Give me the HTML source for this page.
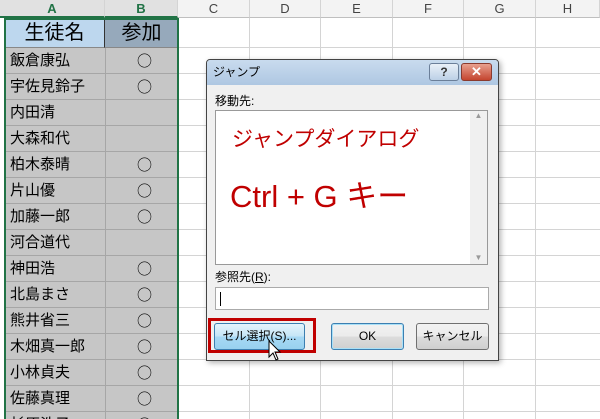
<!DOCTYPE html>
<html><head><meta charset="utf-8"><style>
*{margin:0;padding:0;box-sizing:border-box}
html,body{width:600px;height:419px;overflow:hidden}
body{background:#fff;position:relative;font-family:"Liberation Sans","Noto Sans CJK JP",sans-serif}
.a{position:absolute}
.ch{top:0;height:18px;background:#f3f3f3;border-right:1px solid #d4d4d4;border-bottom:1px solid #bfbfbf;font-size:13px;text-align:center;line-height:18px;color:#444}
.vl{top:18px;width:1px;height:401px;background:#d4d4d4}
.hl{left:178px;width:422px;height:1px;background:#d4d4d4}
.cell{left:5px;width:173px;height:26px;background:#c6c6c6;border-bottom:1px solid #a6a6a6;font-size:15px;line-height:25px}
.cell span{position:absolute;left:5px}
.cell b{position:absolute;left:132px;font-weight:normal;font-family:"Noto Sans CJK JP",sans-serif;font-size:15px}
.btn{top:263px;height:27px;border:1px solid #707070;border-radius:3px;background:linear-gradient(#f2f2f2,#ebebeb 50%,#dcdcdc 51%,#cfcfcf);font-size:12px;text-align:center;line-height:25px;color:#000}
</style></head><body>
<div class="a ch" style="left:0;width:105px;background:#e1e1e1;color:#217346;font-weight:bold;border-bottom:2px solid #217346">A</div>
<div class="a ch" style="left:105px;width:73px;background:#e1e1e1;color:#217346;font-weight:bold;border-bottom:2px solid #217346">B</div>
<div class="a ch" style="left:178px;width:72px">C</div>
<div class="a ch" style="left:250px;width:71px">D</div>
<div class="a ch" style="left:321px;width:72px">E</div>
<div class="a ch" style="left:393px;width:71px">F</div>
<div class="a ch" style="left:464px;width:72px">G</div>
<div class="a ch" style="left:536px;width:64px">H</div>
<div class="a vl" style="left:249px"></div><div class="a vl" style="left:320px"></div><div class="a vl" style="left:392px"></div><div class="a vl" style="left:463px"></div><div class="a vl" style="left:535px"></div>
<div class="a hl" style="top:47px"></div><div class="a hl" style="top:73px"></div><div class="a hl" style="top:99px"></div><div class="a hl" style="top:125px"></div><div class="a hl" style="top:151px"></div><div class="a hl" style="top:177px"></div><div class="a hl" style="top:203px"></div><div class="a hl" style="top:229px"></div><div class="a hl" style="top:255px"></div><div class="a hl" style="top:281px"></div><div class="a hl" style="top:307px"></div><div class="a hl" style="top:333px"></div><div class="a hl" style="top:359px"></div><div class="a hl" style="top:385px"></div><div class="a hl" style="top:411px"></div>
<div class="a" style="left:5px;top:18px;width:100px;height:30px;background:#bdd7ee;border-right:1px solid #333;border-bottom:1px solid #888;font-size:20px;text-align:center;line-height:30px">生徒名</div>
<div class="a" style="left:105px;top:18px;width:73px;height:30px;background:#96a9bb;border-bottom:1px solid #888;font-size:20px;text-align:center;line-height:30px">参加</div>
<div class="a cell" style="top:48px"><span>飯倉康弘</span><b>○</b></div>
<div class="a cell" style="top:74px"><span>宇佐見鈴子</span><b>○</b></div>
<div class="a cell" style="top:100px"><span>内田清</span></div>
<div class="a cell" style="top:126px"><span>大森和代</span></div>
<div class="a cell" style="top:152px"><span>柏木泰晴</span><b>○</b></div>
<div class="a cell" style="top:178px"><span>片山優</span><b>○</b></div>
<div class="a cell" style="top:204px"><span>加藤一郎</span><b>○</b></div>
<div class="a cell" style="top:230px"><span>河合道代</span></div>
<div class="a cell" style="top:256px"><span>神田浩</span><b>○</b></div>
<div class="a cell" style="top:282px"><span>北島まさ</span><b>○</b></div>
<div class="a cell" style="top:308px"><span>熊井省三</span><b>○</b></div>
<div class="a cell" style="top:334px"><span>木畑真一郎</span><b>○</b></div>
<div class="a cell" style="top:360px"><span>小林貞夫</span><b>○</b></div>
<div class="a cell" style="top:386px"><span>佐藤真理</span><b>○</b></div>
<div class="a cell" style="top:412px"><span>杉原浩子</span><b>○</b></div>
<div class="a" style="left:105px;top:48px;width:1px;height:371px;background:#a6a6a6"></div>
<div class="a" style="left:4px;top:18px;width:175px;height:410px;border:2px solid #217346"></div>

<div class="a" style="left:206px;top:59px;width:293px;height:302px;border:1px solid #444;border-radius:4px 4px 0 0;background:#f0f0f0;box-shadow:2px 2px 6px rgba(0,0,0,.3)">
 <div class="a" style="left:0;top:0;width:291px;height:25px;background:linear-gradient(#c9dbee,#aec7e2);border-radius:3px 3px 0 0;font-size:12px;line-height:25px;padding-left:6px">ジャンプ</div>
 <div class="a" style="left:222px;top:3px;width:30px;height:18px;border:1px solid #6b7f99;border-radius:3px;background:linear-gradient(#e9f0f8,#bcd0e6);font-size:12px;text-align:center;line-height:16px;font-weight:bold;color:#333">?</div>
 <div class="a" style="left:254px;top:3px;width:31px;height:18px;border:1px solid #8a3a2e;border-radius:3px;background:linear-gradient(#e8a08f,#c4452f);font-size:13px;text-align:center;line-height:16px;font-weight:bold;color:#fff">✕</div>
 <div class="a" style="left:8px;top:32px;font-size:12px">移動先:</div>
 <div class="a" style="left:8px;top:50px;width:273px;height:155px;background:#fff;border:1px solid #999">
  <div class="a" style="right:0;top:0;width:17px;height:153px;background:#f0f0f0;font-size:8px;color:#999;text-align:center">▲<div class="a" style="bottom:2px;width:17px">▼</div></div>
  <div class="a" style="left:16px;top:12px;font-size:21px;color:#c00000">ジャンプダイアログ</div>
  <div class="a" style="left:14px;top:60px;font-size:31px;color:#c00000">Ctrl + G キー</div>
 </div>
 <div class="a" style="left:8px;top:208px;font-size:12px">参照先(<u>R</u>):</div>
 <div class="a" style="left:8px;top:227px;width:274px;height:23px;background:#fff;border:1px solid #aaa"><div class="a" style="left:4px;top:4px;width:1px;height:14px;background:#000"></div></div>
 <div class="a btn" style="left:7px;width:91px;border-color:#3c7fb1;background:linear-gradient(#e5f4fc,#c4e5f6 50%,#a7d9f5 51%,#98d1ef)">セル選択(S)...</div>
 <div class="a btn" style="left:124px;width:73px;border-color:#3c7fb1;box-shadow:inset 0 0 0 1px #a9e0f7">OK</div>
 <div class="a btn" style="left:209px;width:73px">キャンセル</div>
 <div class="a" style="left:1px;top:258px;width:108px;height:35px;border:3px solid #c00000"></div>
</div>
<svg class="a" style="left:268px;top:340px" width="16" height="24" viewBox="0 0 16 24"><path d="M1 1 L1 17 L5 13 L8 20 L10 19 L7 12 L12 12 Z" fill="#fff" stroke="#000" stroke-width="1"/></svg>
</body></html>
